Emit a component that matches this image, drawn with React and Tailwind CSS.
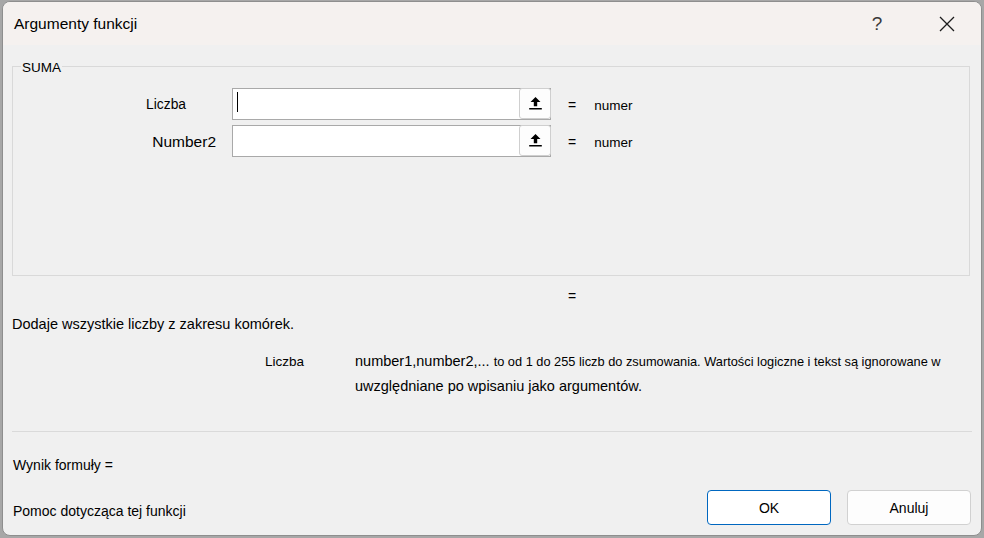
import React from "react";

const F = { fontFamily: '"Liberation Sans", Arial, sans-serif' };

function RefButton() {
  return (
    <div className="ml-auto mr-[-1px] mt-[-1px] flex h-[31px] w-[32px] items-center justify-center rounded-[3px] border border-[#cfcfcf] bg-[#fdfdfd]">
      <svg width="15" height="15" viewBox="0 0 15 15">
        <path d="M7.5 1 L12.5 6 L9.2 6 L9.2 10.3 L5.8 10.3 L5.8 6 L2.5 6 Z" fill="#000" />
        <rect x="1.2" y="12" width="12.6" height="1.5" fill="#000" />
      </svg>
    </div>
  );
}

function ArgRow({ label, labelClass, caret, className }) {
  return (
    <div className={"flex items-center " + className}>
      <div className={"mt-[2px] w-[219px] text-right " + labelClass}>{label}</div>
      <div className="flex h-[32px] w-[319px] items-start border border-[#a9a9a9] bg-white">
        {caret && <div className="ml-[4px] mt-[3px] h-[20px] w-[1px] bg-black" />}
        <RefButton />
      </div>
      <div className="ml-[17px] mt-[2px] text-[14px] leading-[20px]">=</div>
      <div className="ml-[18px] mt-[3px] text-[13.5px] leading-[20px]">numer</div>
    </div>
  );
}

export default function App() {
  return (
    <div className="h-[538px] w-[984px] overflow-hidden bg-[#a7a7a7] pl-[2px] pt-[1px] text-black" style={F}>
      <div className="flex h-[535px] w-[980px] flex-col overflow-hidden rounded-[8px] border border-[#8e8e8e] bg-[#f0f0f0]">
        {/* Title bar */}
        <div className="flex h-[43px] shrink-0 items-center bg-[#f5f1ef] pl-[11px]">
          <div className="mt-[1px] text-[15.5px] leading-[20px]">Argumenty funkcji</div>
          <div className="ml-auto flex w-[46px] items-center justify-center text-[19px] leading-[20px] text-[#3a3a3a]">?</div>
          <div className="ml-[24px] mr-[11px] flex w-[46px] items-center justify-center">
            <svg width="16" height="16" viewBox="0 0 16 16">
              <path d="M1 1 L15 15 M15 1 L1 15" stroke="#1c1c1c" strokeWidth="1.3" />
            </svg>
          </div>
        </div>

        {/* Body */}
        <div className="flex flex-1 flex-col pl-[9px] pr-[10px]">
          <div className="relative mt-[21px] h-[210px] w-[958px] border border-[#d9d9d9]">
            <div className="absolute left-[8px] top-[-7px] bg-[#f0f0f0] px-[1px] text-[13.5px] leading-[16px]">SUMA</div>
            <ArgRow label="Liczba" labelClass="pr-[46px] text-[13.8px]" caret className="mt-[21px]" />
            <ArgRow label="Number2" labelClass="pr-[16px] text-[15.5px]" className="mt-[5px]" />
          </div>

          <div className="ml-[556px] mt-[10px] h-[20px] text-[14px] leading-[20px]">=</div>

          <div className="mt-[8px] text-[14.5px] leading-[20px]">Dodaje wszystkie liczby z zakresu komórek.</div>

          <div className="mt-[15px] flex">
            <div className="ml-[253px] w-[90px] text-[13.5px] leading-[26px]">Liczba</div>
            <div className="text-[14.5px] leading-[24px]">
              number1,number2,...{" "}
              <span className="text-[12.8px]">
                to od 1 do 255 liczb do zsumowania. Wartości logiczne i tekst są ignorowane w
              </span>
              <br />
              uwzględniane po wpisaniu jako argumentów.
            </div>
          </div>

          <div className="mt-[33px] h-[1px] w-[960px] bg-[#dadada]" />

          <div className="ml-[1px] mt-[23px] text-[14px] leading-[20px]">Wynik formuły =</div>

          <div className="mt-[15px] flex items-start">
            <div className="ml-[1px] mt-[11px] text-[14px] leading-[20px]">Pomoc dotycząca tej funkcji</div>
            <button className="ml-auto flex h-[35px] w-[124px] items-center justify-center rounded-[4px] border border-[#0067c0] bg-white pt-[2px] text-[14px]" style={F}>
              OK
            </button>
            <button className="ml-[16px] flex h-[35px] w-[124px] items-center justify-center rounded-[4px] border border-[#d1d1d1] bg-[#fdfdfd] pt-[2px] text-[14px]" style={F}>
              Anuluj
            </button>
          </div>
        </div>
      </div>
    </div>
  );
}
